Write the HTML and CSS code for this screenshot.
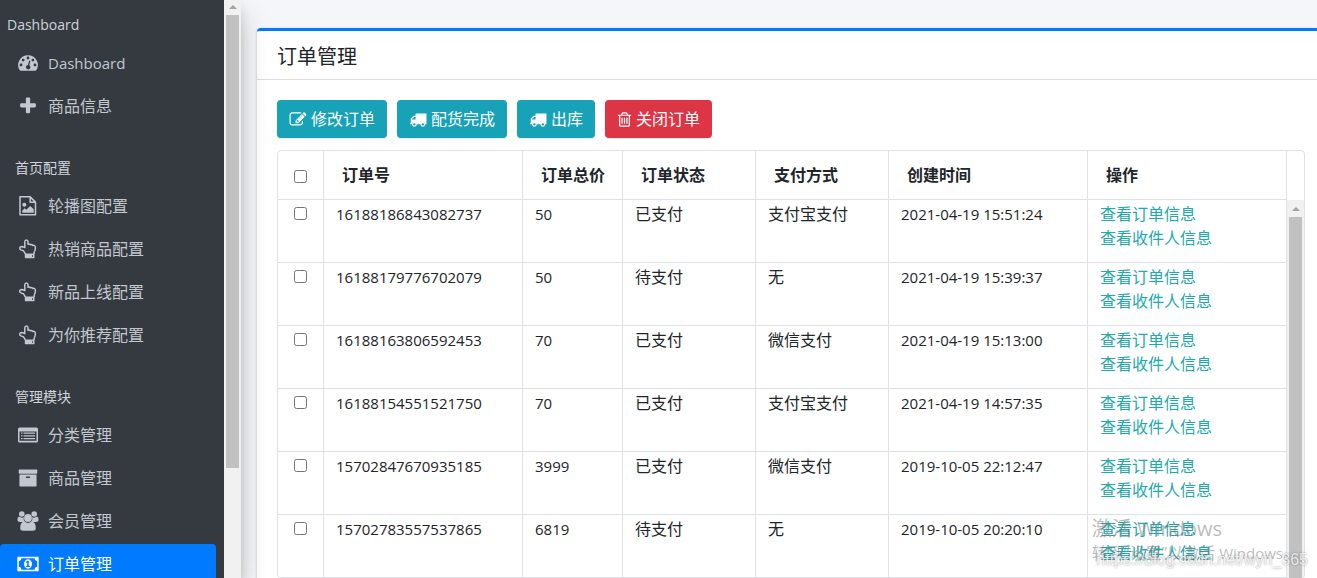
FILE: index.html
```html
<!DOCTYPE html>
<html lang="zh-CN">
<head>
<meta charset="utf-8">
<title>订单管理</title>
<link rel="stylesheet" href="styles.css">
</head>
<body>
<svg class="defs" aria-hidden="true">
  <symbol id="gauge" viewBox="0 0 20 20"><path fill-rule="evenodd" d="M10 2.2A9.8 9.8 0 0 0 1.6 17.1Q2 17.8 2.8 17.8H17.2Q18 17.8 18.4 17.1A9.8 9.8 0 0 0 10 2.2ZM3 10.600a1.400 1.400 0 1 1 0 2.800a1.400 1.400 0 1 1 0-2.800ZM5.200 5.700a1.400 1.400 0 1 1 0 2.800a1.400 1.400 0 1 1 0-2.800ZM10 3.600a1.400 1.400 0 1 1 0 2.800a1.400 1.400 0 1 1 0-2.800ZM14.900 5.700a1.400 1.400 0 1 1 0 2.800a1.400 1.400 0 1 1 0-2.800ZM17 10.600a1.400 1.400 0 1 1 0 2.800a1.400 1.400 0 1 1 0-2.800ZM11.200 7.600L12.300 7.900L11.300 12.300A2.200 2.200 0 1 1 10 12Z"/></symbol>
  <symbol id="plus" viewBox="0 0 1792 1792"><path d="M1600 736v192q0 40-28 68t-68 28h-416v416q0 40-28 68t-68 28h-192q-40 0-68-28t-28-68v-416h-416q-40 0-68-28t-28-68v-192q0-40 28-68t68-28h416v-416q0-40 28-68t68-28h192q40 0 68 28t28 68v416h416q40 0 68 28t28 68z"/></symbol>
  <symbol id="image" viewBox="0 0 20 20"><path d="M2 .7H12.200V6.300H17.500V18.800H2ZM12.200.9L17.400 6.100" fill="none" stroke="currentColor" stroke-width="1.500" stroke-linejoin="round"/><circle cx="6.300" cy="8.800" r="2"/><path d="M4.300 16.700V14.500L6.700 12.200L8.300 13.700L12.200 9.900L15.700 13.300V16.700Z"/></symbol>
  <symbol id="hand" viewBox="0 0 20 20"><path d="M7 15V14.200L5.300 11.700L2.900 10.900Q1.500 10.300 1.700 8.900Q2.100 7.400 3.900 7.500L6.800 8.500V2.700Q6.900.9 8.400.9Q10 .9 10 2.700V5.300Q11.300 4.700 12.400 5.700Q13.800 5.300 14.800 6.400Q17.300 6 17.400 8.500Q17.500 10.700 16.200 13L16 15" fill="none" stroke="currentColor" stroke-width="1.500" stroke-linejoin="round"/><path fill-rule="evenodd" d="M6.800 14.500H16.500V18.700Q16.500 19.300 15.900 19.300H7.300Q6.800 19.300 6.800 18.500ZM14 16.200V17.700H15V16.200Z"/></symbol>
  <symbol id="list" viewBox="0 0 20 20"><path fill-rule="evenodd" d="M1.500 2.500H18.500Q20 2.500 20 4V16Q20 17.500 18.500 17.500H1.500Q0 17.500 0 16V4Q0 2.500 1.500 2.500ZM1.500 6.500V15.700H18.500V6.500Z"/><path d="M3 7.500H4.500V8.800H3ZM5.500 7.500H17V8.800H5.500ZM3 10.200H4.500V11.500H3ZM5.500 10.200H17V11.500H5.500ZM3 12.900H4.500V14.200H3ZM5.500 12.900H17V14.200H5.500Z"/></symbol>
  <symbol id="archive" viewBox="0 0 1792 1792"><path d="M1088 832q0-26-19-45t-45-19h-256q-26 0-45 19t-19 45 19 45 45 19h256q26 0 45-19t19-45zm576-192v960q0 26-19 45t-45 19h-1408q-26 0-45-19t-19-45v-960q0-26 19-45t45-19h1408q26 0 45 19t19 45zm64-448v256q0 26-19 45t-45 19h-1536q-26 0-45-19t-19-45v-256q0-26 19-45t45-19h1536q26 0 45 19t19 45z"/></symbol>
  <symbol id="group" viewBox="0 0 22 20"><circle cx="4.800" cy="3" r="2.800"/><circle cx="17.200" cy="3" r="2.800"/><path d="M2 5.600Q5 7.500 6.700 6Q6.200 9 8 11H3Q.4 11 .4 8.800Q.4 6 2 5.600ZM20 5.600Q17 7.500 15.300 6Q15.800 9 14 11H19Q21.600 11 21.600 8.800Q21.600 6 20 5.600Z"/><circle cx="11" cy="7" r="3.900"/><path d="M7.500 10.500Q11 13.400 14.500 10.500Q18.800 10.800 18.800 17Q18.800 19.700 16 19.700H6Q3.200 19.700 3.200 17Q3.200 10.800 7.500 10.500Z"/></symbol>
  <symbol id="money" viewBox="0 0 22 20"><path fill-rule="evenodd" d="M1 2.800H21Q21.700 2.800 21.700 3.500V16.500Q21.700 17.200 21 17.200H1Q.3 17.200.3 16.500V3.500Q.3 2.800 1 2.800ZM4.600 4.300Q4.400 6.900 1.800 7.200V12.800Q4.400 13 4.600 15.700H17.400Q17.600 13 20.200 12.800V7.200Q17.600 6.900 17.400 4.300ZM11 5.300A4 4.700 0 0 1 11 14.700A4 4.700 0 0 1 11 5.300ZM10.300 6.800L8.700 8.200L9.500 9L10.200 8.400V11.800H9V13H13V11.800H11.700V6.800Z"/></symbol>
  <symbol id="edit" viewBox="0 0 1792 1792"><path d="M888 1184l116-116-152-152-116 116v56h96v96h56zm440-720q-16-16-33 1l-350 350q-17 17-1 33t33-1l350-350q17-17 1-33zm80 594v190q0 119-84.500 203.500t-203.500 84.500h-832q-119 0-203.500-84.500t-84.500-203.500v-832q0-119 84.500-203.500t203.500-84.500h832q63 0 117 25 15 7 18 23 3 17-9 29l-49 49q-14 14-32 8-23-6-45-6h-832q-66 0-113 47t-47 113v832q0 66 47 113t113 47h832q66 0 113-47t47-113v-126q0-13 9-22l64-64q15-15 35-7t20 29zm-96-738l288 288-672 672h-288v-288zm444 132l-92 92-288-288 92-92q28-28 68-28t68 28l152 152q28 28 28 68t-28 68z"/></symbol>
  <symbol id="truck" viewBox="0 0 1792 1792"><path d="M640 1408q0-52-38-90t-90-38-90 38-38 90 38 90 90 38 90-38 38-90zm-384-512h384v-256h-158q-13 0-22 9l-195 195q-9 9-9 22v30zm1280 512q0-52-38-90t-90-38-90 38-38 90 38 90 90 38 90-38 38-90zm256-1088v1024q0 15-4 26.500t-13.500 18.500-16.500 11.500-23.500 6-22.500 2-25.500 0-22.500-.5q0 106-75 181t-181 75-181-75-75-181h-384q0 106-75 181t-181 75-181-75-75-181h-64q-3 0-22.500.5t-25.500 0-22.500-2-23.500-6-16.500-11.500-13.500-18.500-4-26.500q0-26 19-45t45-19v-320q0-8-.5-35t0-38 2.500-34.500 6.500-37 14-30.500 22.500-30l198-198q19-19 50.500-32t58.500-13h160v-192q0-26 19-45t45-19h1024q26 0 45 19t19 45z"/></symbol>
  <symbol id="trash" viewBox="192 0 1408 1792"><path d="M704 736v576q0 14-9 23t-23 9h-64q-14 0-23-9t-9-23v-576q0-14 9-23t23-9h64q14 0 23 9t9 23zm256 0v576q0 14-9 23t-23 9h-64q-14 0-23-9t-9-23v-576q0-14 9-23t23-9h64q14 0 23 9t9 23zm256 0v576q0 14-9 23t-23 9h-64q-14 0-23-9t-9-23v-576q0-14 9-23t23-9h64q14 0 23 9t9 23zm128 724v-948h-896v948q0 22 7 40.500t14.500 27 10.500 8.500h832q3 0 10.500-8.500t14.500-27 7-40.500zm-672-1076h448l-48-117q-7-9-17-11h-317q-10 2-17 11zm928 32v64q0 14-9 23t-23 9h-96v948q0 83-47 143.500t-113 60.500h-832q-66 0-113-58.500t-47-141.500v-952h-96q-14 0-23-9t-9-23v-64q0-14 9-23t23-9h309l70-167q15-37 54-63t79-26h320q40 0 79 26t54 63l70 167h309q14 0 23 9t9 23z"/></symbol>
</svg>
<div class="app">
  <aside class="sidebar">
    <nav class="nav">
      <h2 class="nav-header nav-header-first">Dashboard</h2>
      <a class="nav-link latin" href="#"><svg class="nav-icon"><use href="#gauge"/></svg><span>Dashboard</span></a>
      <a class="nav-link" href="#"><svg class="nav-icon"><use href="#plus"/></svg><span>商品信息</span></a>
      <h2 class="nav-header">首页配置</h2>
      <a class="nav-link" href="#"><svg class="nav-icon"><use href="#image"/></svg><span>轮播图配置</span></a>
      <a class="nav-link" href="#"><svg class="nav-icon"><use href="#hand"/></svg><span>热销商品配置</span></a>
      <a class="nav-link" href="#"><svg class="nav-icon"><use href="#hand"/></svg><span>新品上线配置</span></a>
      <a class="nav-link" href="#"><svg class="nav-icon"><use href="#hand"/></svg><span>为你推荐配置</span></a>
      <h2 class="nav-header">管理模块</h2>
      <a class="nav-link" href="#"><svg class="nav-icon"><use href="#list"/></svg><span>分类管理</span></a>
      <a class="nav-link" href="#"><svg class="nav-icon"><use href="#archive"/></svg><span>商品管理</span></a>
      <a class="nav-link" href="#"><svg class="nav-icon"><use href="#group"/></svg><span>会员管理</span></a>
      <a class="nav-link active" href="#"><svg class="nav-icon"><use href="#money"/></svg><span>订单管理</span></a>
    </nav>
    <div class="scrollbar"><span class="arrow"></span><span class="thumb thumb-nav"></span></div>
  </aside>
  <main class="content">
    <section class="card">
      <header class="card-header"><h1 class="card-title">订单管理</h1></header>
      <div class="card-body">
        <div class="toolbar">
          <button class="btn btn-info" type="button"><svg class="btn-icon"><use href="#edit"/></svg>修改订单</button>
          <button class="btn btn-info" type="button"><svg class="btn-icon"><use href="#truck"/></svg>配货完成</button>
          <button class="btn btn-info" type="button"><svg class="btn-icon"><use href="#truck"/></svg>出库</button>
          <button class="btn btn-danger" type="button"><svg class="btn-icon btn-icon-narrow"><use href="#trash"/></svg>关闭订单</button>
        </div>
        <div class="grid">
          <table class="orders">
            <colgroup><col class="c-check"><col class="c-wide"><col class="c-price"><col class="c-mid"><col class="c-mid"><col class="c-wide"><col class="c-wide"></colgroup>
            <thead><tr><th class="check"><input type="checkbox" aria-label="全选"></th><th>订单号</th><th>订单总价</th><th>订单状态</th><th>支付方式</th><th>创建时间</th><th>操作</th></tr></thead>
            <tbody>
              <tr><td class="check"><input type="checkbox" aria-label="选择订单"></td><td class="latin">16188186843082737</td><td class="latin">50</td><td>已支付</td><td>支付宝支付</td><td class="latin">2021-04-19 15:51:24</td><td><a href="#">查看订单信息</a><a href="#">查看收件人信息</a></td></tr>
              <tr><td class="check"><input type="checkbox" aria-label="选择订单"></td><td class="latin">16188179776702079</td><td class="latin">50</td><td>待支付</td><td>无</td><td class="latin">2021-04-19 15:39:37</td><td><a href="#">查看订单信息</a><a href="#">查看收件人信息</a></td></tr>
              <tr><td class="check"><input type="checkbox" aria-label="选择订单"></td><td class="latin">16188163806592453</td><td class="latin">70</td><td>已支付</td><td>微信支付</td><td class="latin">2021-04-19 15:13:00</td><td><a href="#">查看订单信息</a><a href="#">查看收件人信息</a></td></tr>
              <tr><td class="check"><input type="checkbox" aria-label="选择订单"></td><td class="latin">16188154551521750</td><td class="latin">70</td><td>已支付</td><td>支付宝支付</td><td class="latin">2021-04-19 14:57:35</td><td><a href="#">查看订单信息</a><a href="#">查看收件人信息</a></td></tr>
              <tr><td class="check"><input type="checkbox" aria-label="选择订单"></td><td class="latin">15702847670935185</td><td class="latin">3999</td><td>已支付</td><td>微信支付</td><td class="latin">2019-10-05 22:12:47</td><td><a href="#">查看订单信息</a><a href="#">查看收件人信息</a></td></tr>
              <tr><td class="check"><input type="checkbox" aria-label="选择订单"></td><td class="latin">15702783557537865</td><td class="latin">6819</td><td>待支付</td><td>无</td><td class="latin">2019-10-05 20:20:10</td><td><a href="#">查看订单信息</a><a href="#">查看收件人信息</a></td></tr>
            </tbody>
          </table>
          <div class="gutter">
            <div class="gutter-head"></div>
            <div class="scrollbar scrollbar-grid"><span class="arrow"></span><span class="thumb thumb-grid"></span></div>
          </div>
        </div>
      </div>
    </section>
  </main>
  <div class="activation">
    <p class="activation-title">激活 Windows</p>
    <p class="activation-text">转到“设置”以激活 <span class="latin">Windows</span>。</p>
  </div>
  <div class="source">https://blog.csdn.net/wyn_365</div>
</div>
</body>
</html>
```
FILE: styles.css
```css
* { box-sizing: border-box; }
body {
  margin: 0;
  height: 100vh;
  overflow: hidden;
  background: #f4f6f9;
  color: #212529;
  font: 16px/24px "Open Sans", "Noto Sans CJK SC", sans-serif;
}
h1, h2, p { margin: 0; font-weight: 400; }
a { text-decoration: none; }
.defs { display: none; }
.latin { font-size: 15px; }

.app { position: relative; display: flex; height: 100vh; overflow: hidden; }

.sidebar {
  position: relative;
  z-index: 1;
  display: flex;
  flex: none;
  width: 241px;
  background: #343a40;
  box-shadow: 0 14px 28px rgba(0, 0, 0, .2), 0 10px 10px rgba(0, 0, 0, .12);
}
.nav {
  display: flex;
  flex: 1;
  flex-direction: column;
  gap: 3px;
  padding-right: 8px;
  overflow: hidden;
}
.nav-header {
  flex: none;
  padding: 28px 15px 4px;
  color: #d0d4db;
  font-size: 14px;
  line-height: 22px;
}
.nav-header-first { padding: 14px 7px 4px; }
.nav-link {
  display: flex;
  flex: none;
  align-items: center;
  gap: 9px;
  height: 40px;
  padding: 0 17px;
  border-radius: 4px;
  color: #c2c7d0;
}
.nav-icon { flex: none; width: 22px; height: 20px; fill: currentColor; }
.nav-link.active { background: #007bff; color: #fff; }

.scrollbar {
  display: flex;
  flex: none;
  flex-direction: column;
  align-items: center;
  width: 17px;
  background: #f1f1f1;
}
.arrow {
  margin: 5px 0 6px;
  border: solid transparent;
  border-width: 0 4px 4px;
  border-bottom-color: #a3a3a3;
}
.thumb { width: 13px; background: #c1c1c1; }
.thumb-nav { height: 453px; }
.thumb-grid { flex: 1; }

.content { flex: 1; min-width: 0; padding: 28px 0 0 16px; }
.card {
  border-top: 3px solid #007bff;
  border-radius: 4px 0 0 0;
  background: #fff;
  box-shadow: 0 0 1px rgba(0, 0, 0, .125), 0 1px 3px rgba(0, 0, 0, .2);
}
.card-header { padding: 11px 20px 7px; border-bottom: 1px solid #dfdfdf; }
.card-title { font-size: 20px; line-height: 30px; }
.card-body { padding: 20px 12px 20px 20px; }

.toolbar { display: flex; gap: 10px; margin-bottom: 12px; }
.btn {
  display: flex;
  align-items: center;
  gap: 4px;
  height: 38px;
  padding: 0 12px;
  border: 0;
  border-radius: 4px;
  color: #fff;
  font: inherit;
  box-shadow: 0 1px 1px rgba(0, 0, 0, .08);
}
.btn-info { background: #17a2b8; }
.btn-danger { background: #dc3545; }
.btn-icon { flex: none; width: 18px; height: 17px; fill: currentColor; }
.btn-icon-narrow { width: 15px; }

.grid { display: flex; border: 1px solid #dee2e6; border-radius: 4px; overflow: hidden; }
.orders { flex: 1; width: 100%; table-layout: fixed; border-collapse: separate; border-spacing: 0; }
.c-check { width: 46px; }
.c-wide { width: 199px; }
.c-price { width: 100px; }
.c-mid { width: 133px; }
.orders th {
  height: 49px;
  padding: 0 0 0 18px;
  border-right: 1px solid #dee2e6;
  border-bottom: 1px solid #dee2e6;
  font-weight: 600;
  text-align: left;
}
.orders td {
  padding: 2px 12px 12px;
  border-right: 1px solid #dee2e6;
  border-bottom: 1px solid #dee2e6;
  vertical-align: top;
}
.orders td a { display: block; color: #20a9ae; }
.orders .check { padding-left: 0; padding-right: 0; text-align: center; }
.orders input { width: 13px; height: 13px; margin: 0; vertical-align: middle; }
.orders td.check { line-height: 20px; }
.gutter { display: flex; flex: none; flex-direction: column; width: 17px; }
.gutter-head { height: 49px; }
.scrollbar-grid { flex: 1; }
.scrollbar-grid .arrow { margin: 7px 0 6px; }

.activation { position: absolute; z-index: 2; right: 18px; bottom: 13px; color: rgba(120, 120, 120, .5); white-space: nowrap; }
.activation-title { font-size: 20px; }
.source {
  position: absolute;
  z-index: 2;
  right: 9px;
  bottom: 6px;
  color: rgba(255, 255, 255, .8);
  font: 16px/24px "Liberation Sans", sans-serif;
  text-shadow: 0 0 2px rgba(0, 0, 0, .4);
}
```
